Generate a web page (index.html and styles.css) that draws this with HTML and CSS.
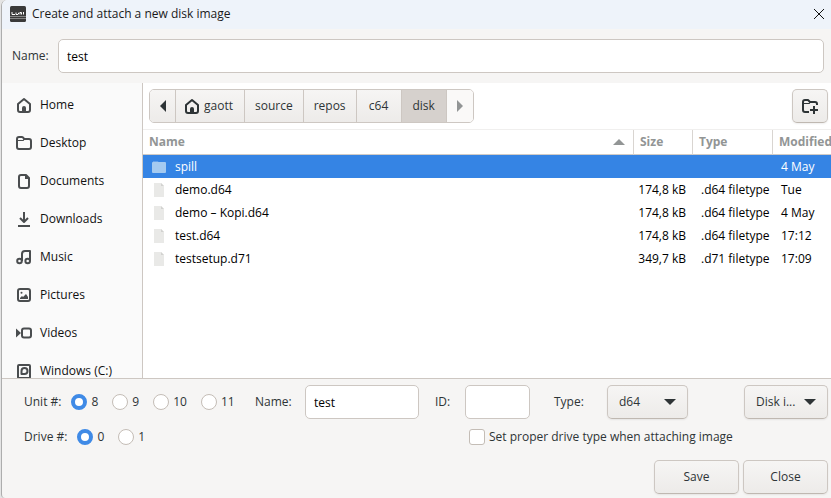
FILE: index.html
```html
<!DOCTYPE html>
<html lang="en">
<head>
<meta charset="utf-8">
<title>Create and attach a new disk image</title>
<link rel="stylesheet" href="styles.css">
</head>
<body>
<div class="window">
  <header class="titlebar">
    <svg class="app-icon" viewBox="0 0 16 16" aria-hidden="true">
      <rect width="16" height="16" rx="1.500" fill="#3a3a3a"/>
      <path d="M2 6v2.500h3M6 6.500v2h2l1-2M10 8.500v-2h1.500v2M13.500 6v2.500" fill="none" stroke="#fff" stroke-width="1"/>
      <path d="M0 10.500h16M0 12.500h16" stroke="#858585" stroke-width="1"/>
    </svg>
    <h1 class="title">Create and attach a new disk image</h1>
    <button class="close" type="button" aria-label="Close window">
      <svg viewBox="0 0 10 10" width="10" height="10"><path d="M0 0l10 10M10 0L0 10" stroke="#111" stroke-width="1"/></svg>
    </button>
  </header>

  <div class="name-row">
    <label for="filename">Name:</label>
    <input class="entry" id="filename" type="text" value="test">
  </div>

  <div class="main">
    <nav class="sidebar">
      <a class="place" href="#"><svg class="icon" viewBox="0 0 16 16"><path d="M2 7L8 2l6 5v6q0 2-2 2H4q-2 0-2-2z"/><path class="solid" d="M6 15v-4q0-2 2-2t2 2v4z"/></svg>Home</a>
      <a class="place" href="#"><svg class="icon" viewBox="0 0 16 16"><path d="M1 5V4q0-2 2-2h3q1 0 1.500 1L8 4h5q2 0 2 2v6q0 2-2 2H3q-2 0-2-2z"/><path class="solid" d="M1 5h6l2-2v1L7.500 6H1z"/></svg>Desktop</a>
      <a class="place" href="#"><svg class="icon" viewBox="0 0 16 16"><path d="M5 2h5l3 3v8q0 2-2 2H5q-2 0-2-2V4q0-2 2-2z"/><path class="solid" d="M9 2v4h4l-3-4z"/></svg>Documents</a>
      <a class="place" href="#"><svg class="icon" viewBox="0 0 16 16"><path d="M8 1v10M4 7l4 4 4-4M2 15h12"/></svg>Downloads</a>
      <a class="place" href="#"><svg class="icon" viewBox="0 0 16 16"><circle cx="3.500" cy="12" r="2.300"/><circle cx="11.700" cy="12" r="2.300"/><path d="M6 12V5q0-3 3-3h5v10"/></svg>Music</a>
      <a class="place" href="#"><svg class="icon" viewBox="0 0 16 16"><rect x="2" y="2" width="12" height="12" rx="2"/><path class="solid" d="M4 12v-1l2-2 1 1 3-3 2 3v2z"/><circle class="solid" cx="5.500" cy="5.800" r="1"/></svg>Pictures</a>
      <a class="place" href="#"><svg class="icon" viewBox="0 0 16 16"><rect x="6" y="3.500" width="9" height="9" rx="2"/><path class="solid" d="M0 3.500L5 8l-5 4.500z"/></svg>Videos</a>
      <a class="place" href="#"><svg class="icon" viewBox="0 0 16 16"><rect x="2" y="2" width="12" height="13" rx="1"/><path d="M5.500 11V8a3 3 0 1 1 3 3z"/></svg>Windows (C:)</a>
    </nav>

    <section class="browser">
      <div class="toolbar">
        <div class="pathbar">
          <button class="crumb arrow" type="button" aria-label="Back"><svg viewBox="0 0 6 12" width="6" height="12"><path d="M6 0v12L0 6z" fill="currentColor"/></svg></button>
          <button class="crumb home" type="button"><svg class="icon dark" viewBox="0 0 16 16"><path d="M2 7L8 2l6 5v6q0 2-2 2H4q-2 0-2-2z"/><path class="solid" d="M6 15v-4q0-2 2-2t2 2v4z"/></svg>gaott</button>
          <button class="crumb" type="button">source</button>
          <button class="crumb" type="button">repos</button>
          <button class="crumb" type="button">c64</button>
          <button class="crumb current" type="button">disk</button>
          <button class="crumb arrow inactive" type="button" aria-label="Forward"><svg viewBox="0 0 6 12" width="6" height="12"><path d="M0 0v12l6-6z" fill="currentColor"/></svg></button>
        </div>
        <button class="button new-folder" type="button" aria-label="Create folder">
          <svg class="icon dark" viewBox="0 0 16 16"><path d="M7 14H3q-2 0-2-2V4q0-2 2-2h3l2 2h5q2 0 2 2v1M12 8v8M8 12h8"/><path class="solid" d="M1 5h6l2-2v1L7.500 6H1z"/></svg>
        </button>
      </div>
      <table class="files">
        <colgroup><col><col class="col-size"><col class="col-type"><col class="col-modified"></colgroup>
        <thead>
          <tr><th><span class="sorted">Name <svg viewBox="0 0 12 6" width="12" height="6"><path d="M0 6h12L6 0z" fill="#929595"/></svg></span></th><th>Size</th><th>Type</th><th>Modified</th></tr>
        </thead>
        <tbody>
          <tr class="selected"><td><span class="file"><svg viewBox="0 0 14 12" width="14" height="12"><path d="M1 0h5l1 2H1z" fill="#62a0ea"/><rect y="1" width="14" height="11" rx="1" fill="#a4caf0"/></svg>spill</span></td><td></td><td></td><td>4 May</td></tr>
          <tr><td><span class="file"><svg viewBox="0 0 14 14" width="14" height="14"><path d="M2 0h7l3 3v11H2z" fill="#e9e9e7"/><path d="M9 0v3h3z" fill="#d2d2d0"/></svg>demo.d64</span></td><td>174,8 kB</td><td>.d64 filetype</td><td>Tue</td></tr>
          <tr><td><span class="file"><svg viewBox="0 0 14 14" width="14" height="14"><path d="M2 0h7l3 3v11H2z" fill="#e9e9e7"/><path d="M9 0v3h3z" fill="#d2d2d0"/></svg>demo – Kopi.d64</span></td><td>174,8 kB</td><td>.d64 filetype</td><td>4 May</td></tr>
          <tr><td><span class="file"><svg viewBox="0 0 14 14" width="14" height="14"><path d="M2 0h7l3 3v11H2z" fill="#e9e9e7"/><path d="M9 0v3h3z" fill="#d2d2d0"/></svg>test.d64</span></td><td>174,8 kB</td><td>.d64 filetype</td><td>17:12</td></tr>
          <tr><td><span class="file"><svg viewBox="0 0 14 14" width="14" height="14"><path d="M2 0h7l3 3v11H2z" fill="#e9e9e7"/><path d="M9 0v3h3z" fill="#d2d2d0"/></svg>testsetup.d71</span></td><td>349,7 kB</td><td>.d71 filetype</td><td>17:09</td></tr>
        </tbody>
      </table>
    </section>
  </div>

  <form class="options">
    <div class="option-row">
      <div class="radios" role="radiogroup" aria-label="Unit">
        <span class="caption">Unit #:</span>
        <label class="choice"><input type="radio" name="unit" checked>8</label>
        <label class="choice"><input type="radio" name="unit">9</label>
        <label class="choice"><input type="radio" name="unit">10</label>
        <label class="choice"><input type="radio" name="unit">11</label>
      </div>
      <div class="field"><label class="label-name" for="disk-name">Name:</label><input class="entry disk-name" id="disk-name" type="text" value="test"></div>
      <div class="field"><label class="label-id" for="disk-id">ID:</label><input class="entry disk-id" id="disk-id" type="text"></div>
      <div class="field"><label class="label-type" for="disk-type">Type:</label>
        <span class="dropdown"><select class="button type-select" id="disk-type"><option>d64</option></select><svg viewBox="0 0 12 6" width="12" height="6"><path d="M0 0h12L6 6z" fill="#2e3436"/></svg></span>
      </div>
      <span class="dropdown filter"><select class="button filter-select" aria-label="File filter"><option>Disk i...</option></select><svg viewBox="0 0 12 6" width="12" height="6"><path d="M0 0h12L6 6z" fill="#2e3436"/></svg></span>
    </div>
    <div class="option-row second">
      <div class="radios" role="radiogroup" aria-label="Drive">
        <span class="caption">Drive #:</span>
        <label class="choice"><input type="radio" name="drive" checked>0</label>
        <label class="choice"><input type="radio" name="drive">1</label>
      </div>
      <label class="choice set-type"><input type="checkbox">Set proper drive type when attaching image</label>
    </div>
    <div class="actions">
      <button class="button action" type="button">Save</button>
      <button class="button action" type="button">Close</button>
    </div>
  </form>
</div>
</body>
</html>
```
FILE: styles.css
```css
* { box-sizing: border-box; }

body {
  margin: 0;
  background: #e4e4e4;
  color: #2e3436;
  font: 12px/16px "Open Sans", "Noto Sans", sans-serif;
}

button, input, select { font: inherit; color: inherit; margin: 0; }

.window {
  display: flex;
  flex-direction: column;
  height: 100vh;
  margin-left: 1px;
  border-left: 1px solid #adadad;
  border-radius: 6px 0 0 4px;
  background: #f6f5f4;
  overflow: hidden;
}

.titlebar {
  display: flex;
  align-items: center;
  flex: none;
  height: 29px;
  padding: 0 4px 2px 8px;
  gap: 6px;
  background: #eef3fa;
  color: #1a1a1a;
}
.app-icon { width: 16px; height: 16px; }
.title { margin: 0; flex: 1; font-size: 12px; font-weight: 400; }
.close { display: flex; padding: 3px; border: 0; background: none; }

.name-row {
  display: flex;
  align-items: center;
  flex: none;
  padding: 10px 7px 10px 10px;
}
.name-row label { width: 46px; }
.name-row .entry { flex: 1; }

.entry {
  height: 34px;
  min-width: 0;
  padding: 0 8px;
  border: 1px solid #cdc7c2;
  border-radius: 5px;
  background: #fff;
  color: #000;
}

.main { display: flex; flex: 1; min-height: 0; background: #fff; }

.sidebar {
  width: 141px;
  flex: none;
  padding-top: 3px;
  border-right: 1px solid #cdc7c2;
  background: #fafafa;
  overflow: hidden;
}
.place {
  display: flex;
  align-items: center;
  gap: 8px;
  height: 38px;
  padding-left: 14px;
  color: #111;
  text-decoration: none;
}

.icon {
  width: 16px;
  height: 16px;
  flex: none;
  fill: none;
  stroke: #4a4d4f;
  stroke-width: 2;
  stroke-linejoin: round;
}
.icon .solid { fill: #4a4d4f; stroke: none; }
.icon.dark { stroke: #2e3436; }
.icon.dark .solid { fill: #2e3436; }

.browser { flex: 1; min-width: 0; overflow: hidden; }
.toolbar {
  display: flex;
  justify-content: space-between;
  padding: 6px 3px 6px 6px;
}

.pathbar {
  display: flex;
  height: 34px;
  border: 1px solid #cdc7c2;
  border-radius: 5px;
  overflow: hidden;
}
.crumb {
  display: flex;
  align-items: center;
  justify-content: center;
  gap: 4px;
  min-width: 45px;
  padding: 0 10px;
  border: 0;
  border-right: 1px solid #cdc7c2;
  background: linear-gradient(#f6f5f4, #edebe9);
}
.crumb svg { flex: none; }
.crumb.home { padding: 0 11px 0 8px; }
.crumb.arrow { width: 26px; min-width: 0; padding: 0; }
.crumb.current { background: #d6d1cd; }
.crumb.inactive { border-right: 0; background: #faf9f8; color: #929595; }

.button {
  height: 34px;
  border: 1px solid #cdc7c2;
  border-bottom-color: #bfb8b1;
  border-radius: 5px;
  background: linear-gradient(#f6f5f4, #edebe9);
  box-shadow: 0 1px 2px rgba(0, 0, 0, .07);
}
.new-folder { display: grid; place-items: center; width: 36px; padding: 0; }

.files {
  width: 100%;
  table-layout: fixed;
  border-collapse: separate;
  border-spacing: 0;
  border-top: 1px solid #f0efee;
  color: #000;
}
.col-size { width: 59px; }
.col-type { width: 80px; }
.col-modified { width: 58px; }
.files th {
  height: 25px;
  padding: 0 0 0 6px;
  border-right: 1px solid #d9d5d1;
  border-bottom: 1px solid #d0cbc6;
  color: #929595;
  text-align: left;
}
.files th:last-child { border-right: 0; }
.sorted { display: flex; align-items: center; justify-content: space-between; padding-right: 8px; }
.files td { height: 23px; padding: 0 0 0 8px; white-space: nowrap; }
.files td:nth-child(2) { padding: 0 7px 0 0; text-align: right; }
.file { display: flex; align-items: center; gap: 9px; padding-left: 1px; }
.selected { background: #3584e4; color: #fff; }

.options {
  flex: none;
  padding: 6px 3px 4px 22px;
  border-top: 1px solid #cdc7c2;
}
.option-row { display: flex; align-items: center; }
.radios { display: flex; width: 231px; flex: none; gap: 14px; }
.caption { margin-right: -4px; white-space: nowrap; }
.choice { display: flex; align-items: center; gap: 4px; white-space: nowrap; }
.choice input {
  appearance: none;
  width: 16px;
  height: 16px;
  border: 1px solid #c4bdb6;
  border-radius: 3px;
  background: #fff;
}
.choice input[type="radio"] { border-radius: 50%; }
.choice input[type="radio"]:checked { border: 4px solid #3f8ae6; }

.field { display: flex; align-items: center; }
.label-name { width: 50px; }
.disk-name { width: 114px; margin-right: 16px; }
.label-id { width: 30px; }
.disk-id { width: 65px; margin-right: 24px; }
.label-type { width: 53px; }
.dropdown { display: grid; align-items: center; }
.dropdown > * { grid-area: 1 / 1; }
.dropdown svg { justify-self: end; margin-right: 12px; pointer-events: none; }
.dropdown select { appearance: none; padding: 0 11px; }
.type-select { width: 81px; }
.filter-select { width: 84px; }
.filter { margin-left: auto; }

.second { padding: 10px 0 15px; }
.set-type { margin-left: 214px; }
.actions { display: flex; justify-content: flex-end; gap: 4px; }
.action { width: 85px; }
```
